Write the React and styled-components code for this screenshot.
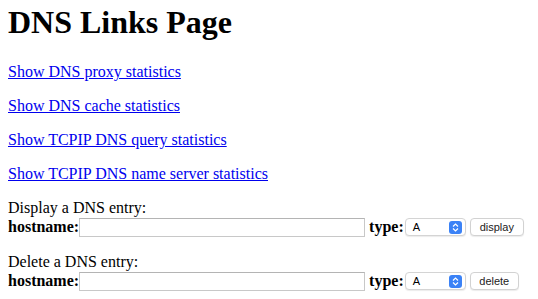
import React from "react";
import styled, { createGlobalStyle } from "styled-components";

const GlobalStyle = createGlobalStyle`
  body {
    margin: 0 8px 8px;
    background: #ffffff;
    color: #000000;
    font-family: "Liberation Serif", "Times New Roman", serif;
    font-size: 16px;
  }
`;

const Title = styled.h1`
  font-size: 32px;
  font-weight: bold;
  margin: 4px 0 22px;
`;

const LinkPara = styled.p`
  margin: 16px 0;
`;

const PageLink = styled.a`
  color: #0000ee;
  text-decoration: underline;
`;

const EntryForm = styled.form`
  margin: 0 0 16px;
`;

const Row = styled.div`
  display: flex;
  align-items: center;
  height: 20px;
`;

const Label = styled.b`
  font-weight: bold;
`;

const TextInput = styled.input`
  box-sizing: border-box;
  width: 286px;
  height: 19px;
  margin: 0 4px 0 0;
  padding: 1px 2px;
  border: 1px solid #c8c8c8;
  border-top-color: #b4b4b4;
  border-radius: 0;
  font: 11px "Liberation Sans", Arial, sans-serif;
  outline: none;
`;

const SelectBox = styled.div`
  position: relative;
  box-sizing: border-box;
  width: 61px;
  height: 18px;
  margin-left: 1px;
  border: 1px solid #d4d4d4;
  border-radius: 4px;
  box-shadow: 0 1px 1px rgba(0, 0, 0, 0.08);
  background: #ffffff;
  font: 11px "Liberation Sans", Arial, sans-serif;
  display: flex;
  align-items: center;
  padding-left: 7px;
`;

const Stepper = styled.span`
  position: absolute;
  right: 3px;
  top: 2px;
  width: 13px;
  height: 13px;
  border-radius: 3px;
  background: #3b82f6;
  display: flex;
  align-items: center;
  justify-content: center;
`;

const SubmitButton = styled.button`
  box-sizing: border-box;
  width: ${(props) => props.width}px;
  height: 18px;
  margin-left: 4px;
  padding: 0;
  border: 1px solid #d2d2d2;
  border-radius: 4px;
  background: #ffffff;
  box-shadow: 0 1px 1px rgba(0, 0, 0, 0.08);
  color: #222222;
  font: 11px "Liberation Sans", Arial, sans-serif;
`;

const links = [
  "Show DNS proxy statistics",
  "Show DNS cache statistics",
  "Show TCPIP DNS query statistics",
  "Show TCPIP DNS name server statistics",
];

function TypeSelect() {
  return (
    <SelectBox>
      A
      <Stepper>
        <svg width="7" height="9" viewBox="0 0 7 9" fill="none">
          <path d="M1 3.5 L3.5 1 L6 3.5" stroke="#fff" strokeWidth="1.2" />
          <path d="M1 5.5 L3.5 8 L6 5.5" stroke="#fff" strokeWidth="1.2" />
        </svg>
      </Stepper>
    </SelectBox>
  );
}

function DnsForm({ caption, action, width }) {
  return (
    <EntryForm onSubmit={(e) => e.preventDefault()}>
      {caption}
      <Row>
        <Label>hostname:</Label>
        <TextInput type="text" />
        <Label>type:</Label>
        <TypeSelect />
        <SubmitButton type="submit" width={width}>
          {action}
        </SubmitButton>
      </Row>
    </EntryForm>
  );
}

export default function App() {
  return (
    <>
      <GlobalStyle />
      <Title>DNS Links Page</Title>
      {links.map((text) => (
        <LinkPara key={text}>
          <PageLink href="#">{text}</PageLink>
        </LinkPara>
      ))}
      <DnsForm caption="Display a DNS entry:" action="display" width={54} />
      <DnsForm caption="Delete a DNS entry:" action="delete" width={49} />
    </>
  );
}
